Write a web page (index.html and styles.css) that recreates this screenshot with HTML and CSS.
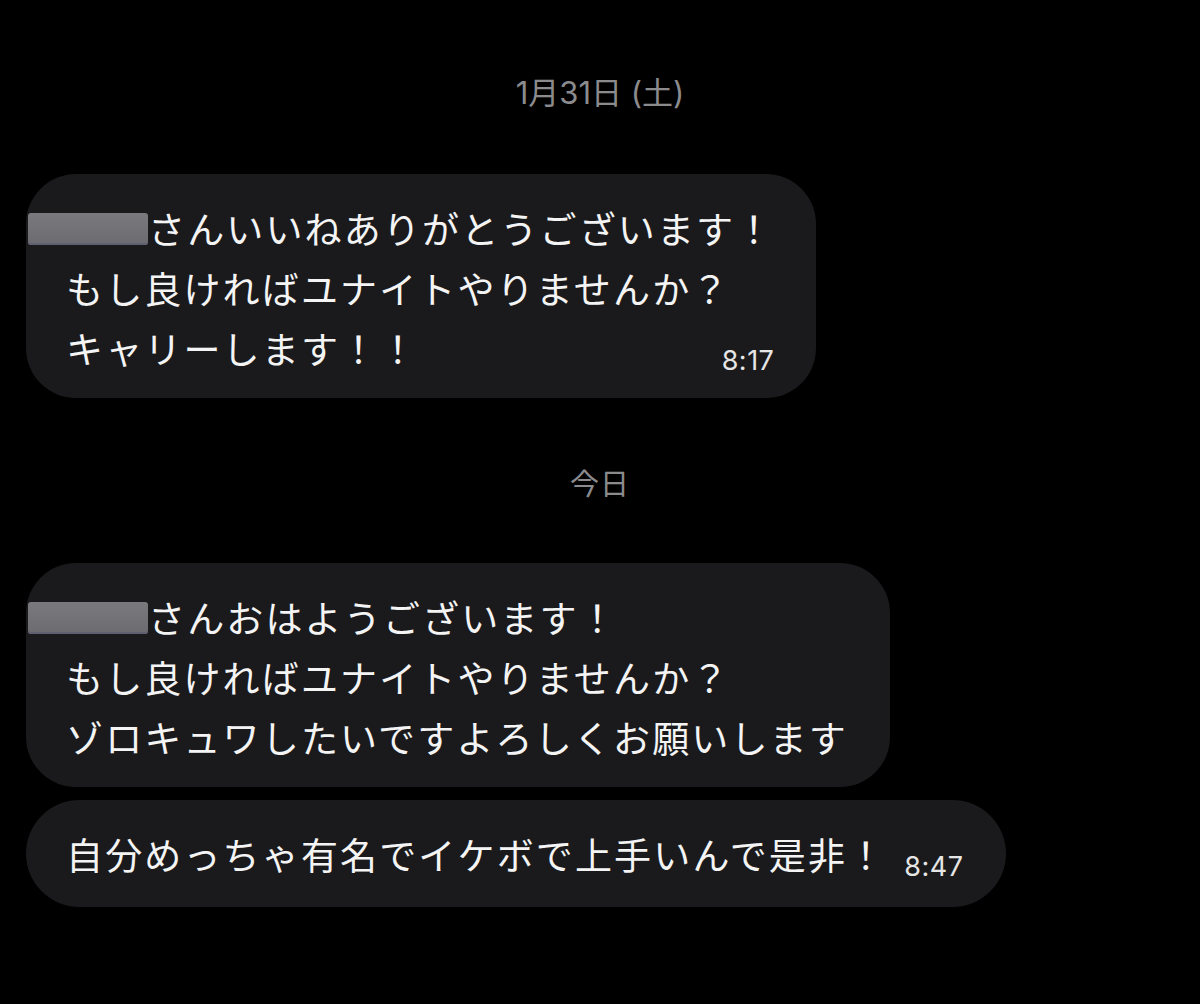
FILE: index.html
```html
<!DOCTYPE html>
<html lang="ja">
<head>
  <meta charset="UTF-8" />
  <meta name="viewport" content="width=device-width, initial-scale=1" />
  <title>メッセージ</title>
  <link rel="stylesheet" href="styles.css">
</head>
<body>
  <main class="chat">
    <div class="day">1月31日 (土)</div>

    <div class="bubble">
      <div class="line"><span class="hidden-name"></span>さんいいねありがとうございます！</div>
      <div class="line">もし良ければユナイトやりませんか？</div>
      <div class="line last">
        <span>キャリーします！！</span>
        <span class="time">8:17</span>
      </div>
    </div>

    <div class="day today">今日</div>

    <div class="bubble">
      <div class="line"><span class="hidden-name"></span>さんおはようございます！</div>
      <div class="line">もし良ければユナイトやりませんか？</div>
      <div class="line">ゾロキュワしたいですよろしくお願いします</div>
    </div>

    <div class="bubble single">
      <div class="line last">
        <span>自分めっちゃ有名でイケボで上手いんで是非！</span>
        <span class="time">8:47</span>
      </div>
    </div>
  </main>
</body>
</html>
```

FILE: styles.css
```css
body {
  margin: 0;
  padding: 0;
  background: #000;
  color: #f4f4f4;
  font-family: "Noto Sans CJK JP", "Noto Sans", sans-serif;
}
.chat {
  display: flex;
  flex-direction: column;
  align-items: flex-start;
  padding: 73px 26px 40px;
  min-height: 1004px;
  box-sizing: border-box;
}
.day {
  align-self: stretch;
  text-align: center;
  font-family: "Inter", "Noto Sans CJK JP", sans-serif;
  font-size: 31px;
  line-height: 40px;
  color: #8b8b8e;
  margin-bottom: 61px;
}
.day.today {
  margin-top: 64px;
  font-family: "Noto Sans CJK JP", sans-serif;
  font-size: 29px;
  letter-spacing: 1px;
}
.bubble {
  background: #1a1a1c;
  border-radius: 50px;
  padding: 24px 42px 20px 40px;
  font-size: 37px;
  line-height: 60px;
  letter-spacing: 2.15px;
  width: fit-content;
}
.bubble + .bubble {
  margin-top: 13px;
}
.bubble.single {
  border-radius: 54px;
  padding-bottom: 23px;
}
.line {
  white-space: nowrap;
}
.line.last {
  display: flex;
  justify-content: space-between;
  gap: 18px;
}
.hidden-name {
  display: inline-block;
  width: 120px;
  height: 32px;
  margin-left: -38px;
  vertical-align: -1px;
  border-radius: 3px;
  background: linear-gradient(180deg, #7a7a7e, #6b6b70);
  box-shadow: inset 0 -2px 0 #5f6072;
}
.time {
  align-self: flex-end;
  font-family: "Inter", "Noto Sans", sans-serif;
  font-size: 27px;
  line-height: 30px;
  letter-spacing: 0.5px;
  color: #e6e6e6;
  margin-bottom: 2px;
}
.bubble:first-of-type .time {
  margin-right: 2px;
}
```
